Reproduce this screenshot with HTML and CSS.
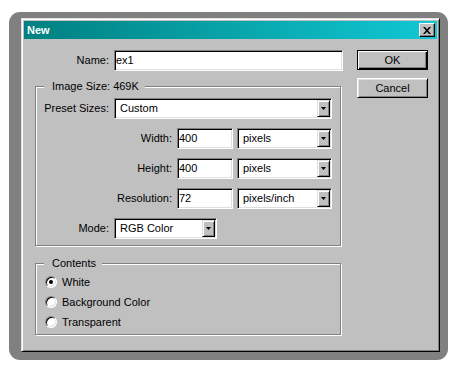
FILE: index.html
```html
<!DOCTYPE html>
<html>
<head>
<meta charset="utf-8">
<title>New</title>
<link rel="stylesheet" href="styles.css">
</head>
<body>
<div class="frame">
  <div class="window">
    <div class="titlebar">
      <span class="title">New</span>
      <span class="close"><svg width="8" height="7" viewBox="0 0 8 7"><path d="M0 0h2l2 2.3L6 0h2L5 3.5 8 7H6L4 4.7 2 7H0l3-3.5z" fill="#000"/></svg></span>
    </div>
    <div class="content">
      <div class="main">
        <div class="row name-row">
          <span class="lbl">Name:</span>
          <div class="field name-field">ex1</div>
        </div>
        <div class="group image-group">
          <span class="legend">Image Size: 469K</span>
          <div class="row">
            <span class="lbl lbl-a">Preset Sizes:</span>
            <div class="select preset"><span>Custom</span><span class="drop"><svg width="5" height="3" viewBox="0 0 5 3"><polygon points="0,0 5,0 2.5,3" fill="#000"/></svg></span></div>
          </div>
          <div class="row">
            <span class="lbl lbl-b">Width:</span>
            <div class="field num">400</div>
            <div class="select unit"><span>pixels</span><span class="drop"><svg width="5" height="3" viewBox="0 0 5 3"><polygon points="0,0 5,0 2.5,3" fill="#000"/></svg></span></div>
          </div>
          <div class="row">
            <span class="lbl lbl-b">Height:</span>
            <div class="field num">400</div>
            <div class="select unit"><span>pixels</span><span class="drop"><svg width="5" height="3" viewBox="0 0 5 3"><polygon points="0,0 5,0 2.5,3" fill="#000"/></svg></span></div>
          </div>
          <div class="row">
            <span class="lbl lbl-b">Resolution:</span>
            <div class="field num">72</div>
            <div class="select unit"><span>pixels/inch</span><span class="drop"><svg width="5" height="3" viewBox="0 0 5 3"><polygon points="0,0 5,0 2.5,3" fill="#000"/></svg></span></div>
          </div>
          <div class="row">
            <span class="lbl lbl-a">Mode:</span>
            <div class="select mode"><span>RGB Color</span><span class="drop"><svg width="5" height="3" viewBox="0 0 5 3"><polygon points="0,0 5,0 2.5,3" fill="#000"/></svg></span></div>
          </div>
        </div>
        <div class="group contents-group">
          <span class="legend">Contents</span>
          <div class="radio-row"><span class="radio checked"></span><span>White</span></div>
          <div class="radio-row"><span class="radio"></span><span>Background Color</span></div>
          <div class="radio-row"><span class="radio"></span><span>Transparent</span></div>
        </div>
      </div>
      <div class="buttons">
        <div class="btn default">OK</div>
        <div class="btn">Cancel</div>
      </div>
    </div>
  </div>
</div>
</body>
</html>
```

FILE: styles.css
```css
* { box-sizing: border-box; }
html, body { margin: 0; padding: 0; background: #fff; }
body {
  font-family: "Liberation Sans", Arial, sans-serif;
  font-size: 11px;
  line-height: 13px;
  color: #000;
}
.frame {
  width: 439px;
  height: 348px;
  margin: 12px 0 0 9px;
  padding: 6px 8px 8px 12px;
  background: #808080;
  border-radius: 11px;
}
.window {
  width: 419px;
  height: 334px;
  background: #c0c0c0;
  border: 1px solid;
  border-color: #dfdfdf #000 #000 #dfdfdf;
  padding: 2px;
  box-shadow: inset 1px 1px #fff, inset -1px -1px #808080;
}
.titlebar {
  height: 18px;
  display: flex;
  align-items: center;
  justify-content: space-between;
  padding: 0 2px 0 3px;
  background: linear-gradient(to right, #008080, #10c8d4);
}
.title { color: #fff; font-weight: bold; font-size: 11px; }
.close {
  width: 16px;
  height: 14px;
  display: flex;
  align-items: center;
  justify-content: center;
  background: #c0c0c0;
  border: 1px solid;
  border-color: #fff #000 #000 #fff;
  box-shadow: inset -1px -1px #808080;
}
.close svg { display: block; }
.content {
  display: flex;
  gap: 14px;
  padding: 11px 0 0 11px;
}
.main { width: 308px; flex: none; }
.row {
  display: flex;
  align-items: center;
  height: 21px;
  gap: 5px;
}
.lbl { text-align: right; flex: none; }
.name-row .lbl { width: 74px; }
.lbl-a { width: 73px; }
.lbl-b { width: 136px; }
.field {
  flex: none;
  height: 21px;
  display: flex;
  align-items: center;
  padding: 0 1px;
  background: #fff;
  border: 1px solid;
  border-color: #808080 #fff #fff #808080;
  box-shadow: inset 1px 1px #000, inset -1px -1px #dfdfdf;
}
.name-field { width: 229px; }
.num { width: 56px; }
.select {
  flex: none;
  height: 21px;
  display: flex;
  align-items: center;
  justify-content: space-between;
  padding: 1px 1px 1px 5px;
  background: #fff;
  border: 1px solid;
  border-color: #808080 #fff #fff #808080;
  box-shadow: inset 1px 1px #000, inset -1px -1px #dfdfdf;
}
.num + .select { margin-left: -1px; }
.preset { width: 218px; }
.unit { width: 95px; }
.mode { width: 103px; }
.drop {
  width: 13px;
  height: 17px;
  display: flex;
  align-items: center;
  justify-content: center;
  background: #c0c0c0;
  border: 1px solid;
  border-color: #dfdfdf #000 #000 #dfdfdf;
  box-shadow: inset 1px 1px #fff, inset -1px -1px #808080;
}
.drop svg { display: block; }
.group {
  position: relative;
  width: 306px;
  border: 1px solid #808080;
  box-shadow: 1px 1px 0 #fff, inset 1px 1px 0 #fff;
}
.legend {
  position: absolute;
  top: -7px;
  left: 8px;
  padding: 0 6px 0 8px;
  background: #c0c0c0;
  line-height: 13px;
}
.image-group {
  height: 160px;
  margin-top: 15px;
  padding: 11px 0 6px 0;
  display: flex;
  flex-direction: column;
  gap: 9px;
}
.contents-group {
  height: 72px;
  margin-top: 17px;
  padding: 10px 0 4px 9px;
  display: flex;
  flex-direction: column;
  gap: 4px;
}
.radio-row {
  display: flex;
  align-items: center;
  height: 16px;
  gap: 5px;
}
.radio {
  position: relative;
  width: 12px;
  height: 12px;
  border-radius: 50%;
  background: #fff;
  border: 1px solid;
  border-color: #808080 #fff #fff #808080;
  box-shadow: inset 1px 1px #000, inset -1px -1px #dfdfdf;
}
.radio.checked::after {
  content: "";
  position: absolute;
  left: 3px;
  top: 3px;
  width: 4px;
  height: 4px;
  border-radius: 50%;
  background: #000;
}
.buttons {
  width: 71px;
  flex: none;
  display: flex;
  flex-direction: column;
  gap: 8px;
}
.btn {
  height: 20px;
  display: flex;
  align-items: center;
  justify-content: center;
  background: #c0c0c0;
  border: 1px solid;
  border-color: #fff #000 #000 #fff;
  box-shadow: inset 1px 1px #dfdfdf, inset -1px -1px #808080;
}
.btn.default {
  border: 1px solid #000;
  box-shadow: inset 1px 1px #fff, inset -1px -1px #000, inset -2px -2px #808080;
}
```
